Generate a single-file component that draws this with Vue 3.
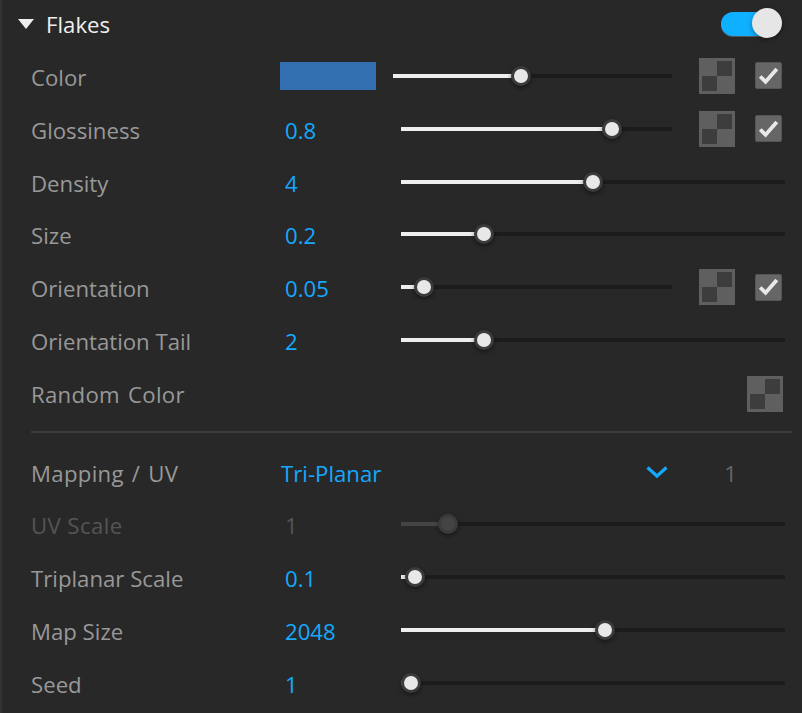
<script setup>
const top = [
  { label: 'Color', swatch: true, knob: 128, width: 279, extras: true },
  { label: 'Glossiness', value: '0.8', knob: 211, width: 271, extras: true },
  { label: 'Density', value: '4', knob: 192 },
  { label: 'Size', value: '0.2', knob: 83 },
  { label: 'Orientation', value: '0.05', knob: 23, width: 271, extras: true },
  { label: 'Orientation Tail', value: '2', knob: 83 },
]
const bottom = [
  { label: 'UV Scale', value: '1', knob: 47, disabled: true },
  { label: 'Triplanar Scale', value: '0.1', knob: 14 },
  { label: 'Map Size', value: '2048', knob: 204 },
  { label: 'Seed', value: '1', knob: 10 },
]
</script>

<template>
  <div class="panel">
    <header class="head">
      <span class="tri"></span>
      <span class="title">Flakes</span>
      <span class="toggle"><span class="toggle-knob"></span></span>
    </header>

    <div v-for="r in top" :key="r.label" class="row">
      <span class="label">{{ r.label }}</span>
      <span v-if="r.swatch" class="cell-swatch"><span class="swatch"></span></span>
      <span v-else class="value">{{ r.value }}</span>
      <div class="slider" :class="{ fixed: r.width }" :style="r.width ? { width: r.width + 'px' } : null">
        <span class="fill" :style="{ width: r.knob + 'px' }"></span>
        <span class="knob" :style="{ left: r.knob + 'px' }"></span>
      </div>
      <template v-if="r.extras">
        <span class="checker"><i></i><i></i></span>
        <span class="check">
          <svg width="21" height="18" viewBox="0 0 21 18"><path d="M2.2 9.5 L7.6 14.8 L18.8 2" fill="none" stroke="#e8e8e8" stroke-width="3.8"/></svg>
        </span>
      </template>
    </div>

    <div class="row">
      <span class="label spaced">Random Color</span>
      <span class="checker end"><i></i><i></i></span>
    </div>

    <div class="divider"></div>

    <div class="row">
      <span class="label spaced">Mapping / UV</span>
      <span class="value wide">Tri-Planar</span>
      <svg class="chev" width="24" height="14" viewBox="0 0 24 14"><path d="M2.5 2.5 L12 11 L21.5 2.5" fill="none" stroke="#14a8ff" stroke-width="3.2"/></svg>
      <span class="one">1</span>
    </div>

    <div v-for="r in bottom" :key="r.label" class="row" :class="{ off: r.disabled }">
      <span class="label">{{ r.label }}</span>
      <span class="value">{{ r.value }}</span>
      <div class="slider">
        <span class="fill" :style="{ width: r.knob + 'px' }"></span>
        <span class="knob" :style="{ left: r.knob + 'px' }"></span>
      </div>
    </div>
  </div>
</template>

<style>
html, body { margin: 0; background: #282828; }
</style>

<style scoped>
.panel {
  width: 802px;
  height: 713px;
  box-sizing: border-box;
  background: #282828;
  border-left: 2px solid #333;
  overflow: hidden;
  font-family: "Open Sans", "Noto Sans", sans-serif;
  font-size: 22.2px;
  color: #989898;
}
.head {
  display: flex;
  align-items: center;
  height: 51.6px;
  padding-left: 16px;
}
.tri {
  width: 0;
  height: 0;
  border-left: 8px solid transparent;
  border-right: 8px solid transparent;
  border-top: 10px solid #eee;
  margin-right: 12px;
  margin-top: -3px;
}
.title { color: #eee; margin-top: -2px; }
.toggle {
  position: relative;
  width: 49px;
  height: 24px;
  margin-left: auto;
  margin-right: 32px;
  margin-top: -3.6px;
  border-radius: 12px;
  background: #0fb0ff;
  box-shadow: 0 1px 0 #555;
}
.toggle-knob {
  position: absolute;
  top: -3.6px;
  right: -12px;
  width: 30px;
  height: 30px;
  border-radius: 50%;
  background: #e6e6e6;
  box-shadow: 0 2px 5px rgba(0, 0, 0, .35);
}
.row {
  display: flex;
  align-items: center;
  height: 52.8px;
  padding-left: 29px;
  padding-right: 17px;
}
.label { width: 250px; flex: none; margin-top: -1px; }
.label.spaced { word-spacing: 2px; letter-spacing: .3px; }
.value { width: 120px; flex: none; color: #14a8ff; padding-left: 4px; box-sizing: border-box; margin-top: -1px; }
.value.wide { width: auto; padding-left: 0; }
.cell-swatch { width: 113px; flex: none; display: flex; margin-left: -1px; margin-top: -4px; }
.swatch { width: 96px; height: 28px; background: #3270b2; }
.slider {
  position: relative;
  flex: 1;
  height: 4px;
  background: #1c1c1c;
  margin-top: -4px;
}
.slider.fixed { flex: none; }
.fill {
  position: absolute;
  left: 0;
  top: 0;
  height: 4px;
  background: #eee;
}
.knob {
  position: absolute;
  top: -8px;
  width: 14px;
  height: 14px;
  margin-left: -10px;
  border: 3px solid #3b3b3b;
  border-radius: 50%;
  background: #e8e8e8;
  box-shadow: 0 2px 4px rgba(0, 0, 0, .45);
}
.checker {
  position: relative;
  display: block;
  flex: none;
  width: 36px;
  height: 36px;
  margin-left: 27px;
  margin-top: -4px;
  background: #5f5f5f;
}
.checker i {
  position: absolute;
  width: 15px;
  height: 15px;
  background: #3d3d3d;
}
.checker i:first-child { left: 18px; top: 3px; }
.checker i:last-child { left: 3px; top: 18px; }
.checker.end { margin-left: auto; margin-right: 2px; margin-top: -2px; }
.check {
  display: flex;
  align-items: center;
  justify-content: center;
  flex: none;
  width: 25px;
  height: 25px;
  margin-left: 20px;
  margin-top: -4px;
  border: 1px solid #555;
  border-radius: 2px;
  background: #666;
}
.divider {
  height: 2px;
  margin: 10px 10px 14px 29px;
  background: #3a3a3a;
}
.chev { margin-left: auto; margin-right: 55.4px; margin-top: -4px; }
.one { color: #666; margin-right: 48px; margin-top: -1px; }
.off .label { letter-spacing: .4px; }
.off .label, .off .value { color: #555; }
.off .fill { background: #444; }
.off .knob { background: #444; border-color: #3b3b3b; }
</style>
